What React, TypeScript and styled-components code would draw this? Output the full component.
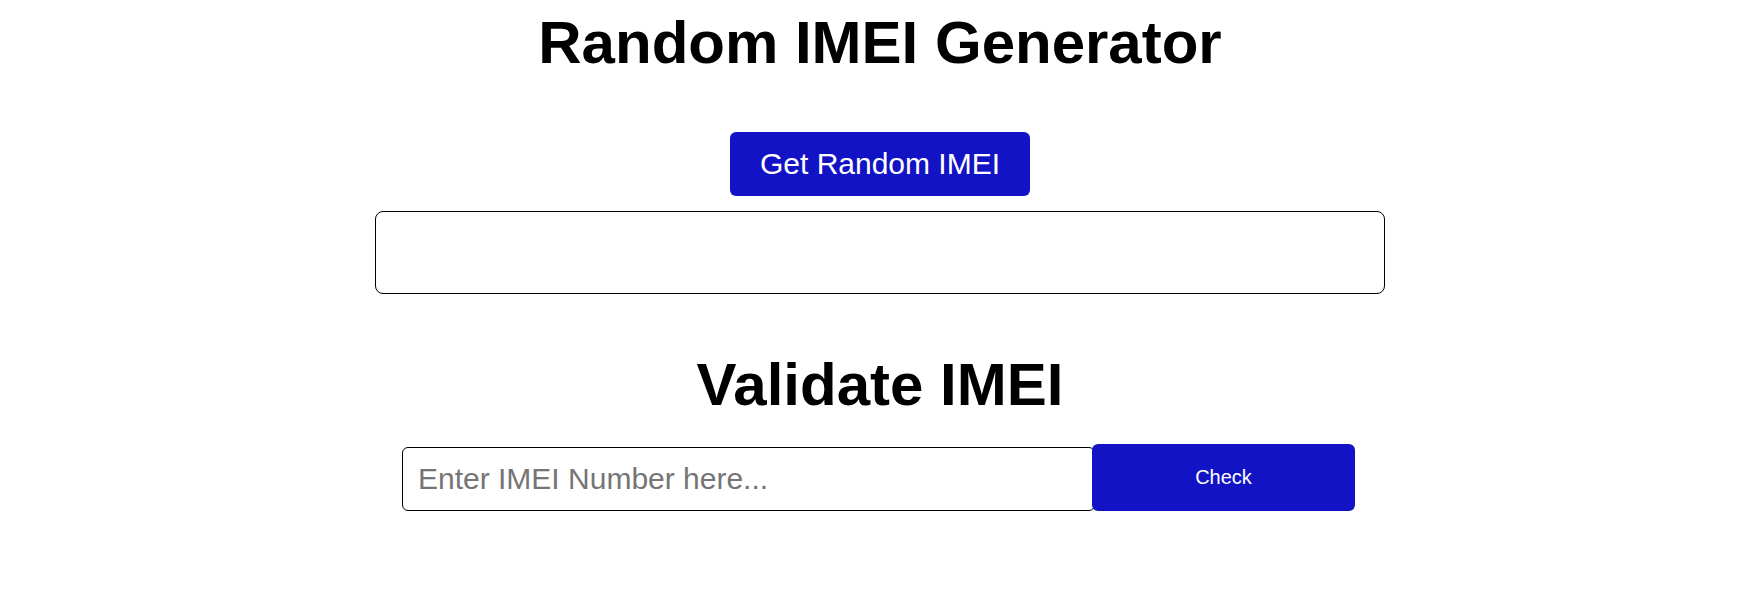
import React from "react";
import styled, { createGlobalStyle } from "styled-components";

const GlobalStyle = createGlobalStyle`
  html, body {
    margin: 0;
    padding: 0;
    background: #ffffff;
    font-family: "Liberation Sans", Arial, sans-serif;
    color: #000000;
  }
  * { box-sizing: border-box; }
`;

const Page = styled.main`
  display: flex;
  flex-direction: column;
  align-items: center;
  padding-top: 10px;
`;

const Heading = styled.h1<{ $gap?: number }>`
  margin: ${(p) => p.$gap ?? 0}px 0 0;
  font-size: 60px;
  font-weight: 700;
  line-height: 66px;
  text-align: center;
`;

const PrimaryButton = styled.button`
  margin-top: 56px;
  height: 64px;
  padding: 0 30px;
  border: none;
  border-radius: 6px;
  background: #1313c6;
  color: #ffffff;
  font-family: "Liberation Sans", Arial, sans-serif;
  font-size: 30px;
  cursor: pointer;
`;

const OutputBox = styled.div`
  margin-top: 15px;
  width: 1010px;
  height: 83px;
  border: 1px solid #000000;
  border-radius: 8px;
`;

const CheckRow = styled.div`
  margin-top: 26px;
  display: flex;
  align-items: flex-end;
`;

const ImeiInput = styled.input`
  width: 693px;
  height: 64px;
  padding: 0 15px;
  border: 1px solid #000000;
  border-radius: 6px;
  font-family: "Liberation Sans", Arial, sans-serif;
  font-size: 30px;
  color: #000000;
  outline: none;
  &::placeholder {
    color: #757575;
  }
`;

const CheckButton = styled.button`
  width: 263px;
  height: 67px;
  margin: 0 3px 0 -3px;
  border: none;
  border-radius: 6px;
  background: #1313c6;
  color: #ffffff;
  font-family: "Liberation Sans", Arial, sans-serif;
  font-size: 20px;
  cursor: pointer;
`;

export default function App() {
  return (
    <>
      <GlobalStyle />
      <Page>
        <Heading>Random IMEI Generator</Heading>
        <PrimaryButton type="button">Get Random IMEI</PrimaryButton>
        <OutputBox />
        <Heading $gap={58}>Validate IMEI</Heading>
        <CheckRow>
          <ImeiInput type="text" placeholder="Enter IMEI Number here..." />
          <CheckButton type="button">Check</CheckButton>
        </CheckRow>
      </Page>
    </>
  );
}
